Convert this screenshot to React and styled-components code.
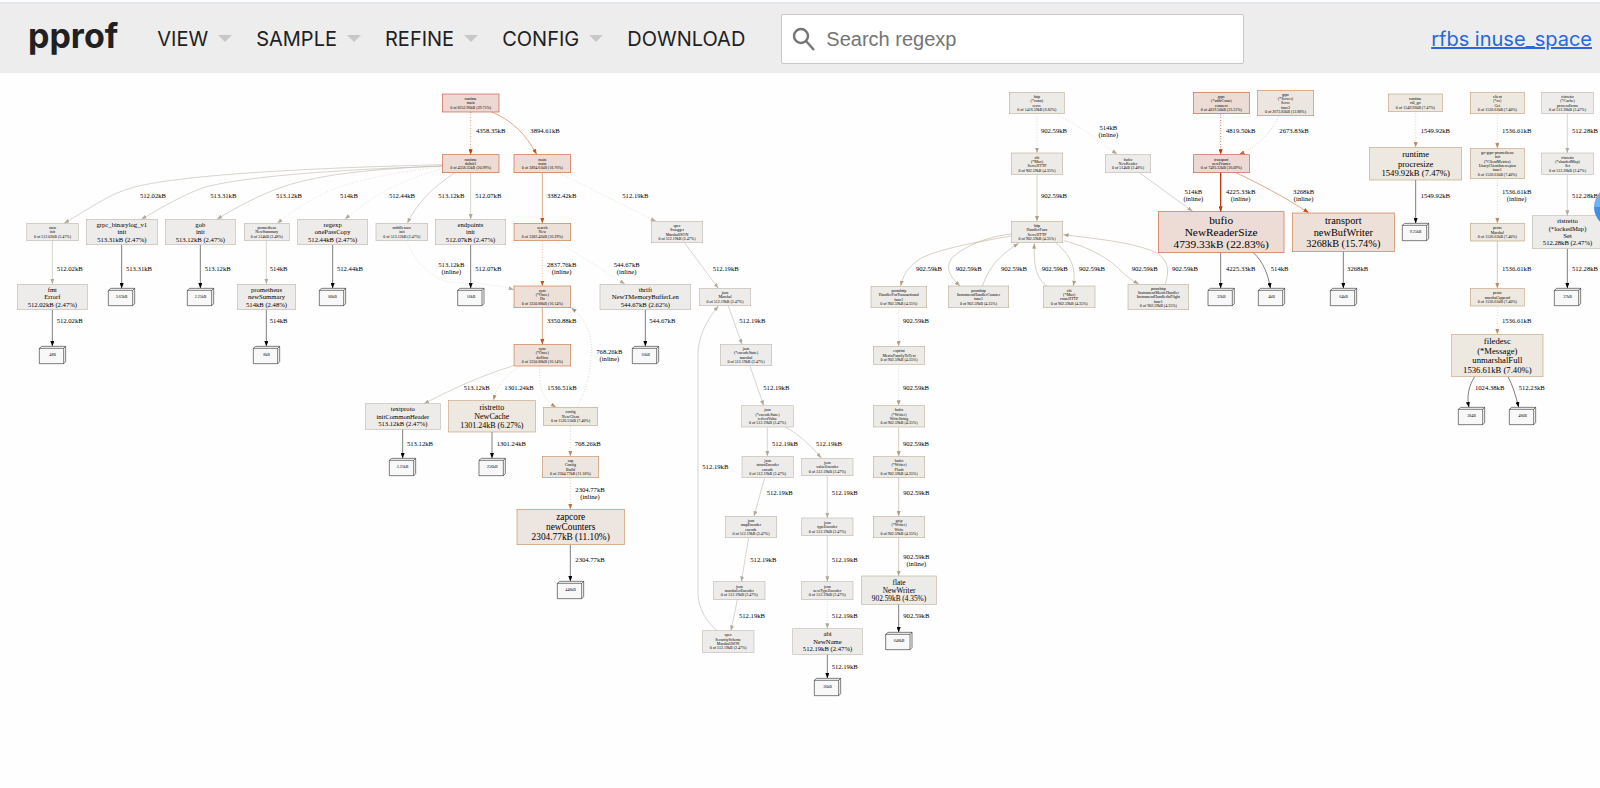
import React from "react";
import styled, { createGlobalStyle } from "styled-components";

// heat levels, from cold (small share of the total) to hot
const LEVELS = [
  { fill: "#edecea", line: "#b2ab9d" },
  { fill: "#edebe7", line: "#b2a084" },
  { fill: "#ede9e1", line: "#b98f62" },
  { fill: "#ede5df", line: "#bd7336" },
  { fill: "#ede0d8", line: "#c25412" },
  { fill: "#eddcd5", line: "#c23a08" },
  { fill: "#edd8d4", line: "#c42a14" },
];
const BLACK = "k";

const lineColor = (level) => (level === BLACK ? "#000" : LEVELS[level].line);

const MENUS = ["VIEW", "SAMPLE", "REFINE", "CONFIG"];

// Each cluster has its own origin on the graph.
// nodes:  [x, y, width, height, level, font size, lines]
// leaves: [x, y, allocation size]
// labels: [center x, center y, value, inline]
// edges:  [level, path, dotted, width]
const CLUSTERS = [
  {
    x: 0,
    y: 0,
    nodes: [
      [80, 430, 155, 52, 0, 12, ["stats", "init", "0 of 512.02kB (2.47%)"]],
      [259, 418, 213, 76, 0, 20, ["grpc_binarylog_v1", "init", "513.31kB (2.47%)"]],
      [496, 418, 210, 76, 0, 20, ["gob", "init", "513.12kB (2.47%)"]],
      [733, 430, 135, 52, 0, 12, ["prometheus", "NewSummary", "0 of 514kB (2.48%)"]],
      [893, 418, 210, 76, 0, 20, ["regexp", "onePassCopy", "512.44kB (2.47%)"]],
      [52, 613, 210, 76, 0, 20, ["fmt", "Errorf", "512.02kB (2.47%)"]],
      [712, 613, 175, 76, 0, 20, ["prometheus", "newSummary", "514kB (2.48%)"]],
    ],
    leaves: [
      [325, 625, "3.63kB"],
      [562, 625, "2.25kB"],
      [958, 625, "80kB"],
      [118, 799, "48B"],
      [760, 799, "8kB"],
    ],
    labels: [
      [459, 346, "512.02kB"],
      [670, 346, "513.31kB"],
      [867, 346, "513.12kB"],
      [1047, 346, "514kB"],
      [209, 565, "512.02kB"],
      [417, 565, "513.31kB"],
      [653, 565, "513.12kB"],
      [836, 565, "514kB"],
      [1050, 565, "512.44kB"],
      [209, 723, "512.02kB"],
      [836, 723, "514kB"],
    ],
    edges: [
      [0, "M1327,254 C1000,262 560,280 400,322 C330,340 270,385 192,430"],
      [0, "M1327,258 C1050,268 760,285 620,320 C560,338 480,385 424,418"],
      [0, "M1327,258 C1130,266 960,282 850,320 C790,340 710,380 651,418"],
      [0, "M1327,260 C1200,275 1100,295 1020,320 C950,345 880,390 832,430", true],
      [0, "M1327,266 C1240,290 1190,315 1150,335 C1100,365 1060,395 1035,418", true],
      [0, "M157,482 V612"],
      [BLACK, "M365,494 V625"],
      [BLACK, "M601,494 V625"],
      [0, "M799,482 V612"],
      [BLACK, "M998,494 V625"],
      [BLACK, "M157,690 V799"],
      [BLACK, "M799,690 V799"],
    ],
  },
  {
    x: 1140,
    y: 0,
    nodes: [
      [187, 42, 170, 54, 6, 12, ["runtime", "main", "0 of 8252.96kB (39.75%)"]],
      [187, 224, 170, 54, 5, 12, ["runtime", "doInit1", "0 of 4358.35kB (20.99%)"]],
      [402, 224, 170, 54, 5, 12, ["main", "main", "0 of 3894.61kB (18.76%)"]],
      [-12, 430, 155, 52, 0, 12, ["middleware", "init", "0 of 513.12kB (2.47%)"]],
      [166, 418, 211, 76, 0, 20, ["endpoints", "init", "512.07kB (2.47%)"]],
      [402, 430, 170, 52, 4, 12, ["search", "New", "0 of 3382.42kB (16.29%)"]],
      [402, 618, 170, 65, 4, 12, ["sync", "(*Once)", "Do", "0 of 3350.88kB (16.14%)"]],
      [402, 793, 170, 65, 4, 12, ["sync", "(*Once)", "doSlow", "0 of 3350.88kB (16.14%)"]],
      [660, 613, 272, 76, 0, 20, ["thrift", "NewTMemoryBufferLen", "544.67kB (2.62%)"]],
      [814, 424, 154, 64, 0, 12, ["spec", "Swagger", "MarshalJSON", "0 of 512.19kB (2.47%)"]],
    ],
    leaves: [
      [233, 625, "16kB"],
      [757, 799, "16kB"],
    ],
    labels: [
      [332, 153, "4358.35kB"],
      [495, 153, "3894.61kB"],
      [66, 346, "512.44kB"],
      [214, 346, "513.12kB"],
      [325, 346, "512.07kB"],
      [545, 346, "3382.42kB"],
      [766, 346, "512.19kB"],
      [214, 553, "513.12kB", true],
      [325, 565, "512.07kB"],
      [545, 553, "2837.76kB", true],
      [740, 553, "544.67kB", true],
      [545, 723, "3350.88kB"],
      [847, 723, "544.67kB"],
      [688, 814, "768.26kB", true],
    ],
    edges: [
      [5, "M272,96 V224", true, 2],
      [4, "M336,96 C400,125 435,160 470,223"],
      [0, "M225,278 C160,320 110,370 82,430"],
      [0, "M272,278 V418"],
      [4, "M487,278 V430"],
      [0, "M540,280 L828,424", true],
      [BLACK, "M272,494 V625"],
      [4, "M487,484 V618", true],
      [0, "M534,486 L735,612", true],
      [0, "M80,484 C100,540 150,590 200,605 C260,612 330,608 402,629", true],
      [4, "M487,684 V793"],
      [BLACK, "M796,690 V799"],
    ],
  },
  {
    x: 1050,
    y: 690,
    nodes: [
      [46, 281, 225, 77, 0, 20, ["textproto", "initCommonHeader", "513.12kB (2.47%)"]],
      [295, 271, 261, 95, 2, 24, ["ristretto", "NewCache", "1301.24kB (6.27%)"]],
      [580, 292, 163, 54, 2, 12, ["config", "NewClient", "0 of 1536.51kB (7.40%)"]],
      [577, 439, 169, 64, 3, 12, ["zap", "Config", "Build", "0 of 2304.77kB (11.10%)"]],
      [501, 598, 322, 106, 3, 28, ["zapcore", "newCounters", "2304.77kB (11.10%)"]],
    ],
    leaves: [
      [118, 445, "2.25kB"],
      [387, 445, "256kB"],
      [622, 814, "448kB"],
    ],
    labels: [
      [380, 233, "513.12kB"],
      [507, 233, "1301.24kB"],
      [636, 233, "1536.51kB"],
      [210, 401, "513.12kB"],
      [484, 401, "1301.24kB"],
      [713, 401, "768.26kB"],
      [720, 539, "2304.77kB", true],
      [720, 750, "2304.77kB"],
    ],
    edges: [
      [0, "M491,167 C400,195 320,230 222,281"],
      [2, "M510,168 C470,195 440,225 431,271", true],
      [2, "M569,170 C566,230 575,265 618,292", true],
      [2, "M682,290 C710,240 724,180 724,110 C722,60 700,20 664,-6", true],
      [BLACK, "M158,358 V445"],
      [BLACK, "M426,366 V445"],
      [2, "M661,348 V439", true],
      [3, "M661,504 V598", true],
      [BLACK, "M661,704 V814"],
    ],
  },
  {
    x: 1950,
    y: 360,
    nodes: [
      [148, 265, 154, 52, 0, 12, ["json", "Marshal", "0 of 512.19kB (2.47%)"]],
      [211, 433, 154, 64, 0, 12, ["json", "(*encodeState)", "marshal", "0 of 512.19kB (2.47%)"]],
      [275, 617, 155, 64, 0, 12, ["json", "(*encodeState)", "reflectValue", "0 of 512.19kB (2.47%)"]],
      [663, 259, 167, 64, 1, 12, ["promhttp", "HandlerForTransactional", "func1", "0 of 902.59kB (4.35%)"]],
      [670, 439, 154, 54, 1, 12, ["expfmt", "MetricFamilyToText", "0 of 902.59kB (4.35%)"]],
      [670, 617, 154, 64, 1, 12, ["bufio", "(*Writer)", "WriteString", "0 of 902.59kB (4.35%)"]],
    ],
    leaves: [],
    labels: [
      [227, 205, "512.19kB"],
      [307, 363, "512.19kB"],
      [379, 564, "512.19kB"],
      [405, 731, "512.19kB"],
      [537, 731, "512.19kB"],
      [798, 363, "902.59kB"],
      [798, 564, "902.59kB"],
      [798, 731, "902.59kB"],
    ],
    edges: [
      [0, "M104,129 L205,265"],
      [0, "M235,318 L276,433"],
      [0, "M300,498 L341,617"],
      [0, "M352,682 V769"],
      [0, "M407,682 C450,705 480,735 514,774"],
      [1, "M746,330 V439", true],
      [1, "M746,498 V617", true],
      [1, "M746,682 V769"],
      [0, "M201,1292 C170,1265 146,1230 144,1180 L144,460 C145,410 170,360 205,318"],
    ],
  },
  {
    x: 2040,
    y: 1080,
    nodes: [
      [186, 49, 154, 64, 0, 12, ["json", "structEncoder", "encode", "0 of 512.19kB (2.47%)"]],
      [365, 55, 154, 52, 0, 12, ["json", "valueEncoder", "0 of 512.19kB (2.47%)"]],
      [580, 49, 154, 64, 1, 12, ["bufio", "(*Writer)", "Flush", "0 of 902.59kB (4.35%)"]],
      [136, 229, 154, 64, 0, 12, ["json", "mapEncoder", "encode", "0 of 512.19kB (2.47%)"]],
      [365, 234, 154, 53, 0, 12, ["json", "typeEncoder", "0 of 512.19kB (2.47%)"]],
      [580, 229, 154, 64, 1, 12, ["gzip", "(*Writer)", "Write", "0 of 902.59kB (4.35%)"]],
      [101, 425, 154, 54, 0, 12, ["json", "marshalerEncoder", "0 of 512.19kB (2.47%)"]],
      [365, 425, 154, 54, 0, 12, ["json", "newTypeEncoder", "0 of 512.19kB (2.47%)"]],
      [545, 408, 224, 85, 1, 22, ["flate", "NewWriter", "902.59kB (4.35%)"]],
      [67, 572, 155, 65, 0, 12, ["spec", "SecurityScheme", "MarshalJSON", "0 of 512.19kB (2.47%)"]],
      [338, 566, 209, 77, 0, 20, ["abi", "NewName", "512.19kB (2.47%)"]],
    ],
    leaves: [
      [617, 577, "648kB"],
      [403, 715, "36kB"],
    ],
    labels: [
      [106, 79, "512.19kB"],
      [299, 158, "512.19kB"],
      [494, 158, "512.19kB"],
      [709, 158, "902.59kB"],
      [250, 360, "512.19kB"],
      [494, 360, "512.19kB"],
      [709, 349, "902.59kB", true],
      [216, 528, "512.19kB"],
      [494, 528, "512.19kB"],
      [709, 528, "902.59kB"],
      [494, 679, "512.19kB"],
    ],
    edges: [
      [0, "M254,113 L222,229"],
      [0, "M442,108 V234"],
      [1, "M656,113 V229"],
      [0, "M206,293 L184,425"],
      [0, "M442,288 V425"],
      [1, "M656,293 V408"],
      [0, "M172,479 L153,572"],
      [0, "M442,484 V566", true],
      [BLACK, "M656,493 V577"],
      [BLACK, "M442,643 V715"],
    ],
  },
  {
    x: 2580,
    y: 0,
    nodes: [
      [448, 37, 165, 64, 1, 12, ["http", "(*conn)", "serve", "0 of 1416.59kB (6.82%)"]],
      [454, 219, 154, 64, 1, 12, ["chi", "(*Mux)", "ServeHTTP", "0 of 902.59kB (4.35%)"]],
      [736, 224, 136, 54, 0, 12, ["bufio", "NewReader", "0 of 514kB (2.48%)"]],
      [454, 424, 154, 64, 1, 12, ["http", "HandlerFunc", "ServeHTTP", "0 of 902.59kB (4.35%)"]],
      [265, 618, 181, 65, 1, 12, ["promhttp", "InstrumentHandlerCounter", "func1", "0 of 902.59kB (4.35%)"]],
      [550, 618, 155, 65, 1, 12, ["chi", "(*Mux)", "routeHTTP", "0 of 902.59kB (4.35%)"]],
      [804, 613, 182, 76, 1, 12, ["promhttp", "InstrumentMetricHandler", "InstrumentHandlerInFlight", "func1", "0 of 902.59kB (4.35%)"]],
    ],
    leaves: [],
    labels: [
      [582, 153, "902.59kB"],
      [745, 142, "514kB", true],
      [582, 346, "902.59kB"],
      [207, 565, "902.59kB"],
      [326, 565, "902.59kB"],
      [462, 565, "902.59kB"],
      [584, 565, "902.59kB"],
      [696, 565, "902.59kB"],
      [854, 565, "902.59kB"],
      [975, 565, "902.59kB"],
    ],
    edges: [
      [1, "M531,108 V219", true],
      [1, "M595,106 C660,140 710,175 771,223", true],
      [1, "M531,283 V424"],
      [0, "M838,278 L998,394"],
      [1, "M454,468 C340,488 220,510 175,540 C140,565 128,590 122,618"],
      [1, "M454,462 C380,470 310,500 275,535 C255,565 270,590 300,618"],
      [1, "M367,618 C385,570 410,530 476,490"],
      [1, "M560,618 C530,595 520,560 523,490"],
      [1, "M588,489 C630,525 650,560 640,618"],
      [1, "M612,482 C700,505 750,540 780,570 C800,590 815,600 836,612"],
      [1, "M916,612 C930,565 925,530 870,510 C800,485 720,478 610,464"],
    ],
  },
  {
    x: 3390,
    y: 0,
    nodes: [
      [190, 37, 168, 64, 5, 12, ["grpc", "(*addrConn)", "connect", "0 of 4819.50kB (23.21%)"]],
      [382, 31, 169, 76, 3, 12, ["grpc", "(*Server)", "Serve", "func3", "0 of 2673.83kB (12.88%)"]],
      [190, 224, 168, 54, 6, 12, ["transport", "newFramer", "0 of 7493.33kB (36.09%)"]],
      [85, 395, 377, 123, 5, 34, ["bufio", "NewReaderSize", "4739.33kB (22.83%)"]],
      [487, 399, 306, 116, 4, 31, ["transport", "newBufWriter", "3268kB (15.74%)"]],
    ],
    leaves: [
      [234, 625, "32kB"],
      [385, 625, "4kB"],
      [601, 625, "64kB"],
    ],
    labels: [
      [332, 153, "4819.50kB"],
      [492, 153, "2673.83kB"],
      [190, 335, "514kB", true],
      [332, 335, "4225.33kB", true],
      [521, 335, "3268kB", true],
      [332, 565, "4225.33kB"],
      [449, 565, "514kB"],
      [683, 565, "3268kB"],
    ],
    edges: [
      [5, "M272,104 V224", true, 3],
      [3, "M446,110 C420,160 390,195 328,223", true],
      [5, "M272,278 V395", false, 4],
      [4, "M318,278 C390,312 470,355 536,398"],
      [BLACK, "M272,518 V625"],
      [BLACK, "M370,518 C400,545 415,585 421,625"],
      [BLACK, "M640,515 V625"],
    ],
  },
  {
    x: 4080,
    y: 0,
    nodes: [
      [85, 42, 162, 53, 2, 12, ["runtime", "rt0_go", "0 of 1549.92kB (7.47%)"]],
      [331, 37, 162, 64, 2, 12, ["client", "(*cc)", "Get", "0 of 1536.61kB (7.40%)"]],
      [545, 37, 155, 64, 0, 12, ["ristretto", "(*Cache)", "processItems", "0 of 512.28kB (2.47%)"]],
      [29, 202, 276, 98, 2, 26, ["runtime", "procresize", "1549.92kB (7.47%)"]],
      [331, 205, 162, 91, 2, 12, ["go-grpc-prometheus", "init", "(*ClientMetrics)", "UnaryClientInterceptor", "func1", "0 of 1536.61kB (7.40%)"]],
      [545, 219, 155, 64, 0, 12, ["ristretto", "(*shardedMap)", "Set", "0 of 512.28kB (2.47%)"]],
      [517, 407, 211, 99, 0, 20, ["ristretto", "(*lockedMap)", "Set", "512.28kB (2.47%)"]],
      [331, 430, 162, 53, 2, 12, ["proto", "Marshal", "0 of 1536.61kB (7.40%)"]],
      [331, 625, 162, 53, 2, 12, ["proto", "marshalAppend", "0 of 1536.61kB (7.40%)"]],
      [275, 763, 274, 127, 2, 26, ["filedesc", "(*Message)", "unmarshalFull", "1536.61kB (7.40%)"]],
    ],
    leaves: [
      [127, 430, "9.25kB"],
      [583, 625, "37kB"],
      [295, 982, "384B"],
      [448, 982, "480B"],
    ],
    labels: [
      [226, 153, "1549.92kB"],
      [470, 153, "1536.61kB"],
      [675, 153, "512.28kB"],
      [226, 346, "1549.92kB"],
      [470, 335, "1536.61kB", true],
      [675, 346, "512.28kB"],
      [470, 565, "1536.61kB"],
      [675, 565, "512.28kB"],
      [470, 723, "1536.61kB"],
      [389, 924, "1024.38kB"],
      [515, 924, "512.23kB"],
    ],
    edges: [
      [2, "M167,100 V202", true],
      [2, "M412,106 V205", true],
      [0, "M622,101 V219"],
      [BLACK, "M167,300 V430"],
      [2, "M412,300 V430", true],
      [0, "M622,283 V407"],
      [2, "M412,483 V625"],
      [BLACK, "M622,506 V625"],
      [2, "M412,682 V763", true],
      [BLACK, "M344,890 C325,920 320,950 327,982"],
      [BLACK, "M444,890 C458,915 468,950 476,982"],
    ],
  },
];

const Lines = ({ cx, cy, size, lines }) => {
  const step = Math.round(size * 1.1);
  const first = cy - ((lines.length - 1) * step) / 2 + size / 3;
  return lines.map((line, i) => (
    <GraphText key={i} x={cx} y={first + i * step} $size={size}>
      {line}
    </GraphText>
  ));
};

const Node = ({ node }) => {
  const [x, y, width, height, level, size, lines] = node;
  return (
    <g>
      <NodeBox x={x} y={y} width={width} height={height} $level={level} />
      <Lines cx={x + width / 2} cy={y + height / 2} size={size} lines={lines} />
    </g>
  );
};

const Leaf = ({ leaf }) => {
  const [x, y, label] = leaf;
  return (
    <g transform={`translate(${x} ${y})`}>
      <LeafBox d="M0,6 L7,0 H79 V46 L73,52 H0 Z M0,6 H73 V52 M73,6 L79,0" />
      <Lines cx={40} cy={25} size={12} lines={[label]} />
    </g>
  );
};

const Graph = () => (
  <GraphSvg viewBox="0 -21 4800 2145" role="img" aria-label="Call graph">
    <defs>
      {[...LEVELS.keys(), BLACK].map((level) => (
        <marker
          key={level}
          id={`arrow-${level}`}
          viewBox="0 0 16 12"
          refX="16"
          refY="6"
          markerWidth="16"
          markerHeight="12"
          markerUnits="userSpaceOnUse"
          orient="auto"
        >
          <path d="M0,0 L16,6 L0,12 Z" fill={lineColor(level)} />
        </marker>
      ))}
    </defs>
    {CLUSTERS.map((cluster, i) => (
      <g key={i} transform={`translate(${cluster.x} ${cluster.y})`}>
        {cluster.edges.map(([level, d, dotted, width]) => (
          <Edge
            key={d}
            d={d}
            markerEnd={`url(#arrow-${level})`}
            $level={level}
            $dotted={dotted}
            $width={width}
          />
        ))}
        {cluster.nodes.map((node) => (
          <Node key={`${node[0]}-${node[1]}`} node={node} />
        ))}
        {cluster.leaves.map((leaf) => (
          <Leaf key={`${leaf[0]}-${leaf[1]}`} leaf={leaf} />
        ))}
        {cluster.labels.map(([x, y, value, inline]) => (
          <Lines
            key={`${x}-${y}`}
            cx={x}
            cy={inline ? y + 11 : y}
            size={20}
            lines={inline ? [value, "(inline)"] : [value]}
          />
        ))}
      </g>
    ))}
  </GraphSvg>
);

const App = () => {
  return (
    <>
      <GlobalStyle />
      <Page>
        <Header>
          <Title>pprof</Title>
          <Menu>
            {MENUS.map((name) => (
              <MenuButton key={name} type="button">
                {name}
                <DownArrow />
              </MenuButton>
            ))}
            <MenuButton type="button">DOWNLOAD</MenuButton>
          </Menu>
          <SearchBox>
            <SearchIcon viewBox="0 0 24 24" aria-hidden="true">
              <circle cx="9" cy="9" r="7" />
              <path d="M14,14 L22,23" />
            </SearchIcon>
            <SearchInput
              type="text"
              placeholder="Search regexp"
              aria-label="Search regexp"
            />
          </SearchBox>
          <Details href="#details">rfbs inuse_space</Details>
        </Header>
        <main>
          <Graph />
        </main>
        <FloatingButton type="button" aria-label="Open assistant" />
      </Page>
    </>
  );
};

export default App;

const GlobalStyle = createGlobalStyle`
  * {
    box-sizing: border-box;
  }
  body {
    margin: 0;
    background: #fefefe;
    font-family: Inter, "Liberation Sans", sans-serif;
  }
`;

const Page = styled.div`
  position: relative;
  overflow: hidden;
  padding-top: 2px;
`;

const Header = styled.header`
  display: flex;
  align-items: center;
  height: 71px;
  padding: 0 8px 0 28px;
  background: #ededed;
  border-top: 2px solid #dfe8f0;
`;

const Title = styled.h1`
  margin: 0 39px 6px 0;
  font-size: 34px;
  line-height: 40px;
  font-weight: 700;
  color: #212121;
`;

const Menu = styled.nav`
  display: flex;
  gap: 24px;
  margin-right: 36px;
`;

const MenuButton = styled.button`
  display: flex;
  align-items: center;
  gap: 10px;
  padding: 0;
  border: none;
  background: none;
  font-family: inherit;
  font-size: 20px;
  line-height: 24px;
  color: #212121;
  cursor: pointer;
`;

const DownArrow = styled.span`
  border-top: 7px solid #c8c8c8;
  border-left: 7px solid transparent;
  border-right: 7px solid transparent;
`;

const SearchBox = styled.div`
  display: flex;
  align-items: center;
  flex: 0 1 463px;
  height: 50px;
  padding: 0 10px;
  gap: 10px;
  background: #fff;
  border: 1px solid #c7c7c7;
  border-radius: 2px;
`;

const SearchIcon = styled.svg`
  flex: none;
  width: 24px;
  height: 24px;
  fill: none;
  stroke: #757575;
  stroke-width: 2.4;
`;

const SearchInput = styled.input`
  flex: 1;
  min-width: 0;
  padding: 0;
  border: none;
  outline: none;
  background: none;
  font-family: "Liberation Sans", Arial, sans-serif;
  font-size: 20px;
  line-height: 24px;
  &::placeholder {
    color: #757575;
  }
`;

const Details = styled.a`
  margin-left: auto;
  font-size: 20px;
  line-height: 24px;
  white-space: nowrap;
  color: #2a66dd;
`;

const GraphSvg = styled.svg`
  display: block;
  width: 100%;
  height: auto;
`;

const GraphText = styled.text`
  font-family: "Liberation Serif", "Times New Roman", serif;
  font-size: ${(props) => props.$size}px;
  text-anchor: middle;
  fill: #000;
`;

const NodeBox = styled.rect`
  fill: ${(props) => LEVELS[props.$level].fill};
  stroke: ${(props) => LEVELS[props.$level].line};
  stroke-width: 2;
  stroke-opacity: 0.75;
`;

const LeafBox = styled.path`
  fill: #f8f8f8;
  stroke: #000;
  stroke-width: 1.5;
`;

const Edge = styled.path`
  fill: none;
  stroke: ${(props) => lineColor(props.$level)};
  stroke-width: ${(props) => props.$width || 1.5};
  stroke-dasharray: ${(props) => (props.$dotted ? "2 6" : "none")};
`;

const FloatingButton = styled.button`
  position: absolute;
  top: 186px;
  right: -36px;
  width: 42px;
  height: 42px;
  padding: 0;
  border: none;
  border-radius: 50%;
  background: linear-gradient(#6fb1f5 50%, #3f8fe3 50%);
`;
